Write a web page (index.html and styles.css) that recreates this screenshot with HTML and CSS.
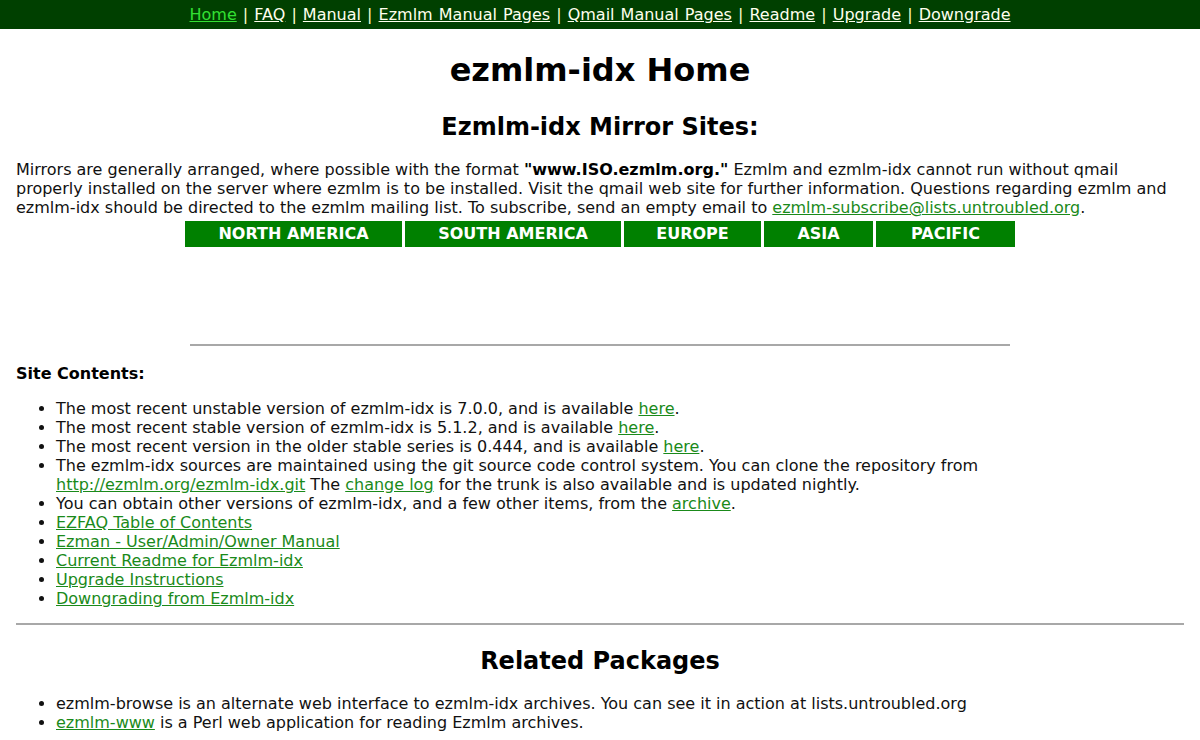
FILE: index.html
```html
<!DOCTYPE html>
<html>
<head>
<meta charset="utf-8">
<title>ezmlm-idx Home</title>
<link rel="stylesheet" href="styles.css">
</head>
<body>
<div class="nav">
  <a class="current" href="#">Home</a> | <a href="#">FAQ</a> | <a href="#">Manual</a> | <a href="#">Ezmlm Manual Pages</a> | <a href="#">Qmail Manual Pages</a> | <a href="#">Readme</a> | <a href="#">Upgrade</a> | <a href="#">Downgrade</a>
</div>
<div class="page">
  <h1 class="title">ezmlm-idx Home</h1>
  <h2 class="mirrors-title">Ezmlm-idx Mirror Sites:</h2>
  <p class="intro">Mirrors are generally arranged, where possible with the format <b>"www.ISO.ezmlm.org."</b> Ezmlm and ezmlm-idx cannot run without qmail properly installed on the server where ezmlm is to be installed. Visit the qmail web site for further information. Questions regarding ezmlm and ezmlm-idx should be directed to the ezmlm mailing list. To subscribe, send an empty email to <a href="#">ezmlm-subscribe@lists.untroubled.org</a>.</p>
  <div class="regions">
    <div class="region r-na">NORTH AMERICA</div>
    <div class="region r-sa">SOUTH AMERICA</div>
    <div class="region r-eu">EUROPE</div>
    <div class="region r-as">ASIA</div>
    <div class="region r-pa">PACIFIC</div>
  </div>
  <div class="rule-short"></div>
  <div class="contents-title">Site Contents:</div>
  <ul class="list contents-list">
    <li>The most recent unstable version of ezmlm-idx is 7.0.0, and is available <a href="#">here</a>.</li>
    <li>The most recent stable version of ezmlm-idx is 5.1.2, and is available <a href="#">here</a>.</li>
    <li>The most recent version in the older stable series is 0.444, and is available <a href="#">here</a>.</li>
    <li>The ezmlm-idx sources are maintained using the git source code control system. You can clone the repository from <a class="nowrap" href="#">http://ezmlm.org/ezmlm-idx.git</a> The <a href="#">change log</a> for the trunk is also available and is updated nightly.</li>
    <li>You can obtain other versions of ezmlm-idx, and a few other items, from the <a href="#">archive</a>.</li>
    <li><a href="#">EZFAQ Table of Contents</a></li>
    <li><a href="#">Ezman - User/Admin/Owner Manual</a></li>
    <li><a href="#">Current Readme for Ezmlm-idx</a></li>
    <li><a href="#">Upgrade Instructions</a></li>
    <li><a href="#">Downgrading from Ezmlm-idx</a></li>
  </ul>
  <div class="rule-full"></div>
  <h2 class="related-title">Related Packages</h2>
  <ul class="list related-list">
    <li>ezmlm-browse is an alternate web interface to ezmlm-idx archives. You can see it in action at lists.untroubled.org</li>
    <li><a href="#">ezmlm-www</a> is a Perl web application for reading Ezmlm archives.</li>
  </ul>
</div>
</body>
</html>
```
FILE: styles.css
```css
html, body {
  margin: 0;
  padding: 0;
  background: #ffffff;
}
body {
  font-family: "DejaVu Sans", "Liberation Sans", sans-serif;
  font-size: 16px;
  line-height: 19px;
  color: #111111;
}
a {
  color: #1a8a1a;
  text-decoration: underline;
}
.nowrap {
  white-space: nowrap;
}
.nav {
  background: #004000;
  height: 29px;
  line-height: 29px;
  text-align: center;
  color: #ffffcc;
  font-size: 16px;
  word-spacing: 1px;
}
.nav a {
  color: #ffffee;
}
.nav a.current {
  color: #33e033;
}
.page {
  padding: 0 16px;
}
.title {
  margin: 22px 0 0;
  font-size: 32px;
  line-height: 38px;
  text-align: center;
  color: #000;
}
.mirrors-title {
  margin: 24px 0 0;
  font-size: 24px;
  line-height: 28px;
  text-align: center;
  color: #000;
}
.intro {
  margin: 19px 0 0;
}
.intro b {
  color: #000;
}
.regions {
  display: flex;
  justify-content: center;
  gap: 3px;
  margin-top: 4px;
}
.region {
  background: #008000;
  color: #ffffff;
  font-weight: bold;
  height: 26px;
  line-height: 26px;
  text-align: center;
  font-size: 16px;
}
.r-na { width: 217px; }
.r-sa { width: 216px; }
.r-eu { width: 137px; }
.r-as { width: 109px; }
.r-pa { width: 139px; }
.rule-short {
  width: 820px;
  height: 2px;
  background: #a8a8a8;
  margin: 97px auto 0;
}
.contents-title {
  margin-top: 18px;
  font-weight: bold;
  color: #000;
}
.list {
  margin: 16px 0 0;
  padding-left: 40px;
}
.rule-full {
  height: 2px;
  background: #a8a8a8;
  margin-top: 15px;
}
.related-title {
  margin: 22px 0 0;
  font-size: 24px;
  line-height: 28px;
  text-align: center;
  color: #000;
}
.related-list {
  margin-top: 19px;
}
```
